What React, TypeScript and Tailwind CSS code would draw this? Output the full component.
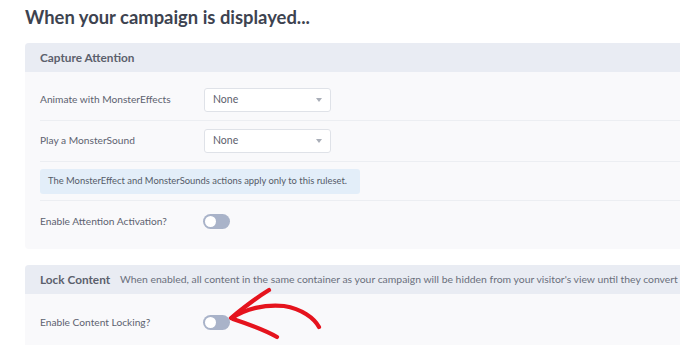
import React from 'react';

const font = { fontFamily: 'Lato, "Open Sans", sans-serif' };

function Select() {
  return (
    <div className="flex h-[24px] w-[127px] items-center justify-between rounded-[3px] border border-[#dfe2e8] bg-white pl-[8px] pr-[8px] text-[10.5px] text-[#5b606c]">
      <span>None</span>
      <span className="h-0 w-0 border-x-[3.5px] border-t-[4px] border-x-transparent border-t-[#a9aeb8]"></span>
    </div>
  );
}

function Toggle() {
  return (
    <div className="-ml-[1px] flex h-[15px] w-[27px] items-center rounded-full bg-[#a9b3c9] px-[2px]">
      <span className="h-[11px] w-[11px] rounded-full bg-white"></span>
    </div>
  );
}

function Row({ label, children, last }: { label: string; children: React.ReactNode; last?: boolean }) {
  return (
    <div className={`flex h-[41px] items-center ${last ? '' : 'border-b border-[#eceef2]'}`}>
      <div className="w-[164px] shrink-0 text-[10.2px] text-[#5d6270]">{label}</div>
      {children}
    </div>
  );
}

export default function App() {
  return (
    <div className="relative h-[345px] w-[680px] overflow-hidden bg-white" style={font}>
      <div className="pl-[25px] pt-[5px]">
        <h1 className="h-[38px] text-[18.4px] font-bold leading-[24px] text-[#3d4350]">
          When your campaign is displayed...
        </h1>

        <div className="w-[720px] overflow-hidden rounded-[4px] bg-[#f9f9fb]">
          <div className="flex h-[29px] items-center bg-[#e9ecf3] px-[15px] text-[11.8px] font-bold text-[#5b606c]">
            Capture Attention
          </div>
          <div className="px-[15px] pb-[7px] pt-[8px]">
            <Row label="Animate with MonsterEffects">
              <Select />
            </Row>
            <Row label="Play a MonsterSound">
              <Select />
            </Row>
            <div className="flex h-[39px] items-center border-b border-[#eceef2]">
              <div className="flex h-[25px] w-[320px] items-center whitespace-nowrap rounded-[3px] bg-[#e3eef9] px-[8px] text-[9.4px] text-[#555b68]">
                The MonsterEffect and MonsterSounds actions apply only to this ruleset.
              </div>
            </div>
            <Row label="Enable Attention Activation?" last>
              <Toggle />
            </Row>
          </div>
        </div>

        <div className="mt-[16px] w-[720px] overflow-hidden rounded-[4px] bg-[#f9f9fb]">
          <div className="flex h-[29px] items-center gap-[10px] whitespace-nowrap bg-[#e9ecf3] px-[15px]">
            <span className="text-[11.8px] font-bold text-[#5b606c]">Lock Content</span>
            <span className="text-[10.4px] text-[#6a6f7c]">
              When enabled, all content in the same container as your campaign will be hidden from your visitor's view until they convert
            </span>
          </div>
          <div className="px-[15px] pb-[10px] pt-[8px]">
            <Row label="Enable Content Locking?" last>
              <Toggle />
            </Row>
          </div>
        </div>
      </div>

      <svg className="pointer-events-none absolute left-0 top-0" width="680" height="345" viewBox="0 0 680 345" fill="none">
        <g stroke="#e5131d" strokeWidth="4.2" strokeLinecap="round" strokeLinejoin="round">
          <path d="M232 318 C 245 309, 265 304, 284 306 C 302 309, 314 318, 319 327" />
          <path d="M231 318 C 243 308, 256 298, 269 290" />
          <path d="M233 319 C 248 324, 265 330, 277 337" />
        </g>
      </svg>
    </div>
  );
}
